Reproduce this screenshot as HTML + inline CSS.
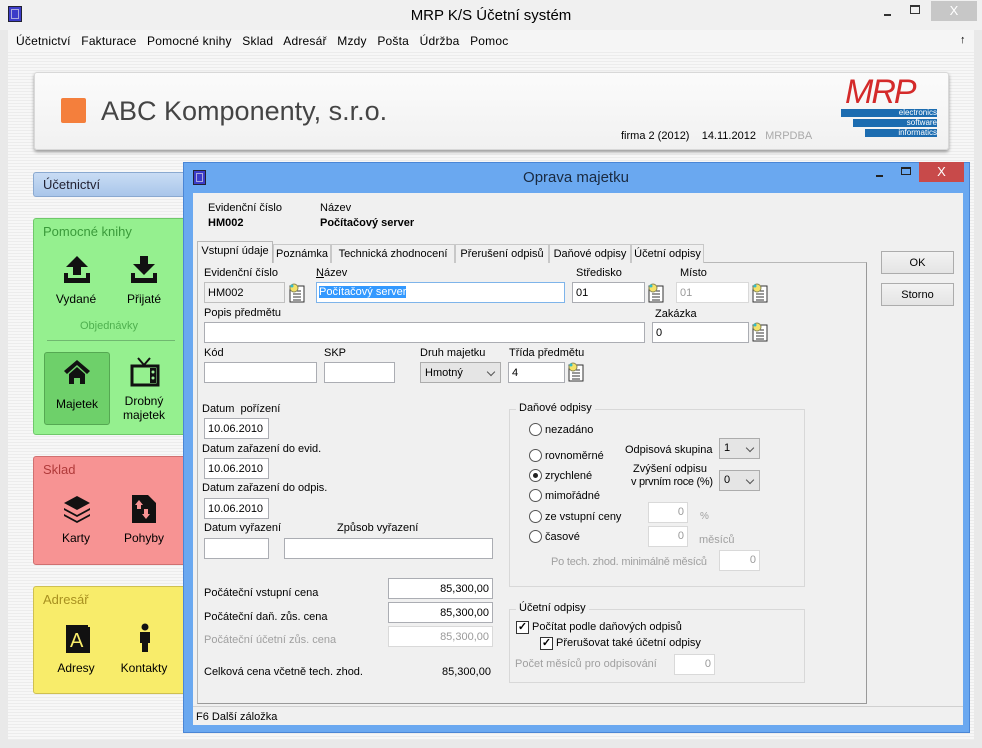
<!DOCTYPE html>
<html><head><meta charset="utf-8">
<style>
*{box-sizing:border-box;margin:0;padding:0}
body{width:982px;height:748px;overflow:hidden;font-family:"Liberation Sans",sans-serif;font-size:11px;color:#000;background:#e9e9e9;position:relative}
.a{position:absolute}
.stripes{background:repeating-linear-gradient(#f7f7f7 0 2px,#ececec 2px 3px)}
.inp{position:absolute;background:#fff;border:1px solid #abadb3;height:21px;padding:4px 3px;font-size:11px;white-space:nowrap;overflow:hidden}
.dis{color:#9a9a9a;border-color:#d9d9d9}
.r{text-align:right}
.lb{position:absolute;font-size:11px;white-space:nowrap}
.g{color:#a0a0a0}
.lk{position:absolute;width:18px;height:20px}
.tab{position:absolute;top:244px;height:19px;border:1px solid #c8c8c8;border-bottom:none;background:#f0f0f0;padding-top:3px;text-align:center;font-size:11px;white-space:nowrap}
.btn{position:absolute;background:linear-gradient(#f2f2f2,#e4e4e4);border:1px solid #acacac;text-align:center;font-size:11px;padding-top:5px}
.rad{position:absolute;width:13px;height:13px;border:1px solid #555;border-radius:50%;background:#fff}
.chk{position:absolute;width:13px;height:13px;border:1px solid #333;background:#fff;font-size:11px;line-height:11px;text-align:center;font-weight:bold}
.sel{position:absolute;background:#e5e5e5;border:1px solid #acacac;height:21px;padding:4px 4px;font-size:11px}
.sel:after{content:"";position:absolute;right:6px;top:6px;width:5px;height:5px;border-right:1.5px solid #555;border-bottom:1.5px solid #555;transform:rotate(45deg)}
.panel{position:absolute;left:33px;width:160px;border-radius:3px}
.pt{position:absolute;left:9px;top:5px;font-size:13px}
.it{position:absolute;text-align:center;font-size:12px;width:60px}
</style></head><body>
<div class="a" style="left:0;top:0;width:982px;height:30px;background:#f0f0f0"></div>
<div class="a" style="left:8px;top:6px;width:14px;height:16px;background:#3c3cc8;border:1px solid #223"></div>
<div class="a" style="left:11px;top:9px;width:8px;height:10px;border:1px solid #aad"></div>
<div class="a" style="left:0;top:7px;width:982px;text-align:center;font-size:15px">MRP K/S Účetní systém</div>
<div class="a" style="left:884px;top:14px;width:7px;height:2px;background:#333"></div>
<div class="a" style="left:910px;top:5px;width:10px;height:9px;border:1px solid #333;border-top-width:2px"></div>
<div class="a" style="left:931px;top:1px;width:46px;height:20px;background:#c7c7c7;color:#fff;text-align:center;font-size:13px;padding-top:2px">X</div>
<div class="a" style="left:8px;top:30px;width:966px;height:20px;background:#f5f5f5"></div>
<div class="a" style="left:16px;top:34px;font-size:12px;letter-spacing:0.2px">Účetnictví&nbsp;&nbsp; Fakturace&nbsp;&nbsp; Pomocné knihy&nbsp;&nbsp; Sklad&nbsp;&nbsp; Adresář&nbsp;&nbsp; Mzdy&nbsp;&nbsp; Pošta&nbsp;&nbsp; Údržba&nbsp;&nbsp; Pomoc</div>
<div class="a" style="left:960px;top:34px;font-size:11px">↑</div>
<div class="a stripes" style="left:8px;top:50px;width:966px;height:690px"></div>
<div class="a" style="left:34px;top:72px;width:915px;height:78px;background:linear-gradient(#fbfbfb,#f1f1f1);border:1px solid #d8d8d8;border-radius:3px;box-shadow:0 2px 3px #999"></div>
<div class="a" style="left:61px;top:98px;width:25px;height:25px;background:#f47f3c;border-radius:2px"></div>
<div class="a" style="left:101px;top:96px;font-size:27px;color:#444">ABC Komponenty, s.r.o.</div>
<div class="a" style="left:621px;top:130px;font-size:11px">firma 2 (2012)&nbsp;&nbsp;&nbsp; 14.11.2012&nbsp;&nbsp; <span style="color:#aaa">MRPDBA</span></div>
<div class="a" style="left:845px;top:76px;width:95px;height:32px;overflow:hidden"><div style="font-size:34px;color:#d42a2a;font-style:italic;line-height:32px;letter-spacing:-2px">MRP</div></div>
<div class="a" style="left:841px;top:109px;width:96px;height:8px;background:#1c6cb0;color:#fff;font-size:8px;line-height:8px;text-align:right">electronics</div>
<div class="a" style="left:853px;top:119px;width:84px;height:8px;background:#1c6cb0;color:#fff;font-size:8px;line-height:8px;text-align:right">software</div>
<div class="a" style="left:865px;top:129px;width:72px;height:8px;background:#1c6cb0;color:#fff;font-size:8px;line-height:8px;text-align:right">informatics</div>
<div class="panel" style="top:172px;height:25px;background:linear-gradient(#c9dcf4,#a9c6ea);border:1px solid #8aa9d0"><div class="pt" style="top:4px;color:#223">Účetnictví</div></div>
<div class="panel" style="top:218px;height:217px;background:#95f08f;border:1px solid #6fc86a"><div class="pt" style="color:#3a9a3a">Pomocné knihy</div>
<svg class="a" style="left:28px;top:36px" width="30" height="28" viewBox="0 0 30 28"><path d="M15 1 L26 12 H19 V20 H11 V12 H4Z M2 18 H6 V23 H24 V18 H28 V28 H2Z" fill="#111"/></svg>
<svg class="a" style="left:95px;top:36px" width="30" height="28" viewBox="0 0 30 28"><path d="M11 1 H19 V9 H26 L15 20 L4 9 H11Z M2 18 H6 V23 H24 V18 H28 V28 H2Z" fill="#111"/></svg>
<div class="it" style="left:12px;top:73px">Vydané</div><div class="it" style="left:80px;top:73px">Přijaté</div>
<div class="it" style="left:45px;top:101px;width:60px;color:#4fb04f;font-size:11px">Objednávky</div>
<div class="a" style="left:13px;top:121px;width:128px;height:1px;background:#70b870"></div>
<div class="a" style="left:10px;top:133px;width:66px;height:73px;background:#6ed06a;border:1px solid #55a852;border-radius:3px"></div>
<svg class="a" style="left:29px;top:140px" width="28" height="26" viewBox="0 0 28 26"><path d="M14 1 L27 12 L24 15 L14 6 L4 15 L1 12Z M6 15 L14 8 L22 15 V25 H17 V19 H11 V25 H6Z" fill="#111"/></svg>
<div class="it" style="left:13px;top:178px">Majetek</div>
<svg class="a" style="left:96px;top:138px" width="30" height="30" viewBox="0 0 30 30"><path d="M8 1 L14 8 L20 1" stroke="#111" stroke-width="2" fill="none"/><rect x="2" y="9" width="26" height="19" fill="none" stroke="#111" stroke-width="3"/><rect x="20" y="11" width="6" height="15" fill="#111"/><circle cx="23" cy="15" r="1.5" fill="#9ef09a"/><circle cx="23" cy="21" r="1.5" fill="#9ef09a"/></svg>
<div class="it" style="left:80px;top:175px;line-height:14px">Drobný<br>majetek</div>
</div>
<div class="panel" style="top:456px;height:109px;background:#f79393;border:1px solid #d07070"><div class="pt" style="color:#b03a3a">Sklad</div>
<svg class="a" style="left:29px;top:38px" width="28" height="28" viewBox="0 0 28 28"><path d="M14 1 L27 8 L14 15 L1 8Z M1 13 L14 20 L27 13 L27 15 L14 22 L1 15Z M1 19 L14 26 L27 19 L27 21 L14 28 L1 21Z" fill="#111"/></svg>
<svg class="a" style="left:97px;top:37px" width="26" height="30" viewBox="0 0 26 30"><path d="M1 1 H17 L25 9 V29 H1Z" fill="#111"/><path d="M8 6 L12 11 H10 V15 H6 V11 H4Z M15 25 L19 20 H17 V15 H13 V20 H11Z" fill="#f79393"/></svg>
<div class="it" style="left:12px;top:74px">Karty</div><div class="it" style="left:80px;top:74px">Pohyby</div>
</div>
<div class="panel" style="top:586px;height:108px;background:#f8ec6a;border:1px solid #cfc050"><div class="pt" style="color:#a89020">Adresář</div>
<svg class="a" style="left:31px;top:37px" width="26" height="30" viewBox="0 0 26 30"><rect x="1" y="1" width="22" height="28" fill="#111"/><rect x="23" y="3" width="2" height="26" fill="#111"/><text x="5" y="23" font-size="20" fill="#f8ec6a" font-family="Liberation Sans">A</text></svg>
<svg class="a" style="left:104px;top:36px" width="14" height="30" viewBox="0 0 14 30"><circle cx="7" cy="4" r="3.5" fill="#111"/><path d="M2 9 H12 V20 H10 V29 H4 V20 H2Z" fill="#111"/></svg>
<div class="it" style="left:12px;top:74px">Adresy</div><div class="it" style="left:80px;top:74px">Kontakty</div>
</div>
<div class="a" style="left:183px;top:162px;width:787px;height:571px;background:#6aa8f0;border:1px solid #4a86d6"></div>
<div class="a" style="left:193px;top:170px;width:13px;height:15px;background:#3c3cc8;border:1px solid #223"></div>
<div class="a" style="left:196px;top:173px;width:7px;height:9px;border:1px solid #aad"></div>
<div class="a" style="left:186px;top:169px;width:780px;text-align:center;font-size:15px;color:#1a2a40">Oprava majetku</div>
<div class="a" style="left:876px;top:175px;width:7px;height:2px;background:#222"></div>
<div class="a" style="left:901px;top:167px;width:10px;height:8px;border:1px solid #222;border-top-width:2px"></div>
<div class="a" style="left:919px;top:162px;width:45px;height:20px;background:#c84a4a;color:#fff;text-align:center;font-size:13px;padding-top:2px">X</div>
<div class="a" style="left:193px;top:193px;width:770px;height:532px;background:#f0f0f0"></div>
<div class="a" style="left:193px;top:706px;width:770px;height:1px;background:#d0d0d0"></div>
<div class="lb" style="left:196px;top:711px">F6 Další záložka</div>
<div class="lb" style="left:208px;top:202px">Evidenční číslo</div>
<div class="lb" style="left:208px;top:217px;font-weight:bold">HM002</div>
<div class="lb" style="left:320px;top:202px">Název</div>
<div class="lb" style="left:320px;top:217px;font-weight:bold">Počítačový server</div>
<div class="a" style="left:197px;top:262px;width:670px;height:442px;border:1px solid #b8b8b8;border-right-color:#999;border-bottom-color:#999;background:#f0f0f0"></div>
<div class="tab" style="left:273px;width:58px">Poznámka</div>
<div class="tab" style="left:331px;width:124px">Technická zhodnocení</div>
<div class="tab" style="left:455px;width:94px">Přerušení odpisů</div>
<div class="tab" style="left:549px;width:82px">Daňové odpisy</div>
<div class="tab" style="left:631px;width:73px">Účetní odpisy</div>
<div class="tab" style="left:197px;top:241px;width:76px;height:22px;background:#f0f0f0;border-color:#b8b8b8">Vstupní údaje</div>
<div class="btn" style="left:881px;top:251px;width:73px;height:23px">OK</div>
<div class="btn" style="left:881px;top:283px;width:73px;height:23px">Storno</div>
<div class="lb" style="left:204px;top:267px">Evidenční číslo</div>
<div class="inp" style="left:204px;top:282px;width:81px;background:#f0f0f0;border-color:#c0c0c0">HM002</div>
<svg class="lk" style="left:288px;top:283px" viewBox="0 0 18 20"><rect x="2" y="3" width="14" height="16" fill="#fff" stroke="#333"/><path d="M5 8h8M5 11h8M5 14h8M5 17h8" stroke="#333"/><circle cx="6" cy="5" r="4" fill="#f4e26a" stroke="#885"/><circle cx="4" cy="3" r="1.5" fill="#3bc"/></svg>
<div class="lb" style="left:316px;top:267px"><u>N</u>ázev</div>
<div class="inp" style="left:316px;top:282px;width:249px;border-color:#7eb4ea;padding:3px 2px"><span style="background:#3399ff;color:#fff">Počítačový server</span></div>
<div class="lb" style="left:576px;top:267px">Středisko</div>
<div class="inp" style="left:572px;top:282px;width:73px">01</div>
<svg class="lk" style="left:647px;top:283px" viewBox="0 0 18 20"><rect x="2" y="3" width="14" height="16" fill="#fff" stroke="#333"/><path d="M5 8h8M5 11h8M5 14h8M5 17h8" stroke="#333"/><circle cx="6" cy="5" r="4" fill="#f4e26a" stroke="#885"/><circle cx="4" cy="3" r="1.5" fill="#3bc"/></svg>
<div class="lb" style="left:680px;top:267px">Místo</div>
<div class="inp dis" style="left:676px;top:282px;width:73px">01</div>
<svg class="lk" style="left:751px;top:283px" viewBox="0 0 18 20"><rect x="2" y="3" width="14" height="16" fill="#fff" stroke="#333"/><path d="M5 8h8M5 11h8M5 14h8M5 17h8" stroke="#333"/><circle cx="6" cy="5" r="4" fill="#f4e26a" stroke="#885"/><circle cx="4" cy="3" r="1.5" fill="#3bc"/></svg>
<div class="lb" style="left:204px;top:307px">Popis předmětu</div>
<div class="inp" style="left:204px;top:322px;width:441px"></div>
<div class="lb" style="left:655px;top:308px">Zakázka</div>
<div class="inp" style="left:652px;top:322px;width:97px">0</div>
<svg class="lk" style="left:751px;top:322px" viewBox="0 0 18 20"><rect x="2" y="3" width="14" height="16" fill="#fff" stroke="#333"/><path d="M5 8h8M5 11h8M5 14h8M5 17h8" stroke="#333"/><circle cx="6" cy="5" r="4" fill="#f4e26a" stroke="#885"/><circle cx="4" cy="3" r="1.5" fill="#3bc"/></svg>
<div class="lb" style="left:204px;top:347px">Kód</div>
<div class="inp" style="left:204px;top:362px;width:113px"></div>
<div class="lb" style="left:324px;top:347px">SKP</div>
<div class="inp" style="left:324px;top:362px;width:71px"></div>
<div class="lb" style="left:420px;top:347px">Druh majetku</div>
<div class="sel" style="left:420px;top:362px;width:81px">Hmotný</div>
<div class="lb" style="left:509px;top:347px">Třída předmětu</div>
<div class="inp" style="left:508px;top:362px;width:57px">4</div>
<svg class="lk" style="left:567px;top:362px" viewBox="0 0 18 20"><rect x="2" y="3" width="14" height="16" fill="#fff" stroke="#333"/><path d="M5 8h8M5 11h8M5 14h8M5 17h8" stroke="#333"/><circle cx="6" cy="5" r="4" fill="#f4e26a" stroke="#885"/><circle cx="4" cy="3" r="1.5" fill="#3bc"/></svg>
<div class="lb" style="left:202px;top:403px">Datum&nbsp; pořízení</div>
<div class="inp" style="left:204px;top:418px;width:65px">10.06.2010</div>
<div class="lb" style="left:202px;top:443px">Datum zařazení do evid.</div>
<div class="inp" style="left:204px;top:458px;width:65px">10.06.2010</div>
<div class="lb" style="left:202px;top:482px">Datum zařazení do odpis.</div>
<div class="inp" style="left:204px;top:498px;width:65px">10.06.2010</div>
<div class="lb" style="left:204px;top:522px">Datum vyřazení</div>
<div class="inp" style="left:204px;top:538px;width:65px"></div>
<div class="lb" style="left:337px;top:522px">Způsob vyřazení</div>
<div class="inp" style="left:284px;top:538px;width:209px"></div>
<div class="lb" style="left:204px;top:587px">Počáteční vstupní cena</div>
<div class="inp r" style="left:388px;top:578px;width:105px">85,300,00</div>
<div class="lb" style="left:204px;top:611px">Počáteční daň. zůs. cena</div>
<div class="inp r" style="left:388px;top:602px;width:105px">85,300,00</div>
<div class="lb g" style="left:204px;top:634px">Počáteční účetní zůs. cena</div>
<div class="inp r dis" style="left:388px;top:626px;width:105px">85,300,00</div>
<div class="lb" style="left:204px;top:666px">Celková cena včetně tech. zhod.</div>
<div class="lb" style="left:442px;top:666px">85,300,00</div>
<div class="a" style="left:509px;top:409px;width:296px;height:178px;border:1px solid #d8d8d8"></div>
<div class="lb" style="left:516px;top:402px;background:#f0f0f0;padding:0 3px">Daňové odpisy</div>
<div class="rad" style="left:529px;top:423px"></div><div class="lb" style="left:545px;top:424px">nezadáno</div>
<div class="rad" style="left:529px;top:449px"></div><div class="lb" style="left:545px;top:450px">rovnoměrné</div>
<div class="rad" style="left:529px;top:469px"></div><div class="a" style="left:533px;top:473px;width:5px;height:5px;border-radius:50%;background:#222"></div><div class="lb" style="left:545px;top:470px">zrychlené</div>
<div class="rad" style="left:529px;top:489px"></div><div class="lb" style="left:545px;top:490px">mimořádné</div>
<div class="rad" style="left:529px;top:510px"></div><div class="lb" style="left:545px;top:511px">ze vstupní ceny</div>
<div class="rad" style="left:529px;top:530px"></div><div class="lb" style="left:545px;top:531px">časové</div>
<div class="lb" style="left:625px;top:444px">Odpisová skupina</div>
<div class="sel" style="left:719px;top:438px;width:41px;height:21px;padding-top:3px">1</div>
<div class="lb" style="left:633px;top:463px">Zvýšení odpisu</div>
<div class="lb" style="left:631px;top:476px;letter-spacing:-0.3px">v prvním roce (%)</div>
<div class="sel" style="left:719px;top:470px;width:41px;padding-top:3px">0</div>
<div class="inp r dis" style="left:648px;top:502px;width:40px;padding-top:3px">0</div>
<div class="lb g" style="left:700px;top:511px;font-size:10px">%</div>
<div class="inp r dis" style="left:648px;top:526px;width:40px;padding-top:3px">0</div>
<div class="lb g" style="left:699px;top:534px">měsíců</div>
<div class="lb g" style="left:551px;top:556px;letter-spacing:-0.2px">Po tech. zhod. minimálně měsíců</div>
<div class="inp r dis" style="left:719px;top:550px;width:41px;padding-top:3px">0</div>
<div class="a" style="left:509px;top:609px;width:296px;height:74px;border:1px solid #d8d8d8"></div>
<div class="lb" style="left:516px;top:602px;background:#f0f0f0;padding:0 3px">Účetní odpisy</div>
<div class="chk" style="left:516px;top:621px">✓</div><div class="lb" style="left:532px;top:621px">Počítat podle daňových odpisů</div>
<div class="chk" style="left:540px;top:637px">✓</div><div class="lb" style="left:556px;top:637px">Přerušovat také účetní odpisy</div>
<div class="lb g" style="left:515px;top:658px">Počet měsíců pro odpisování</div>
<div class="inp r dis" style="left:674px;top:654px;width:41px;padding-top:3px">0</div>
</body></html>
